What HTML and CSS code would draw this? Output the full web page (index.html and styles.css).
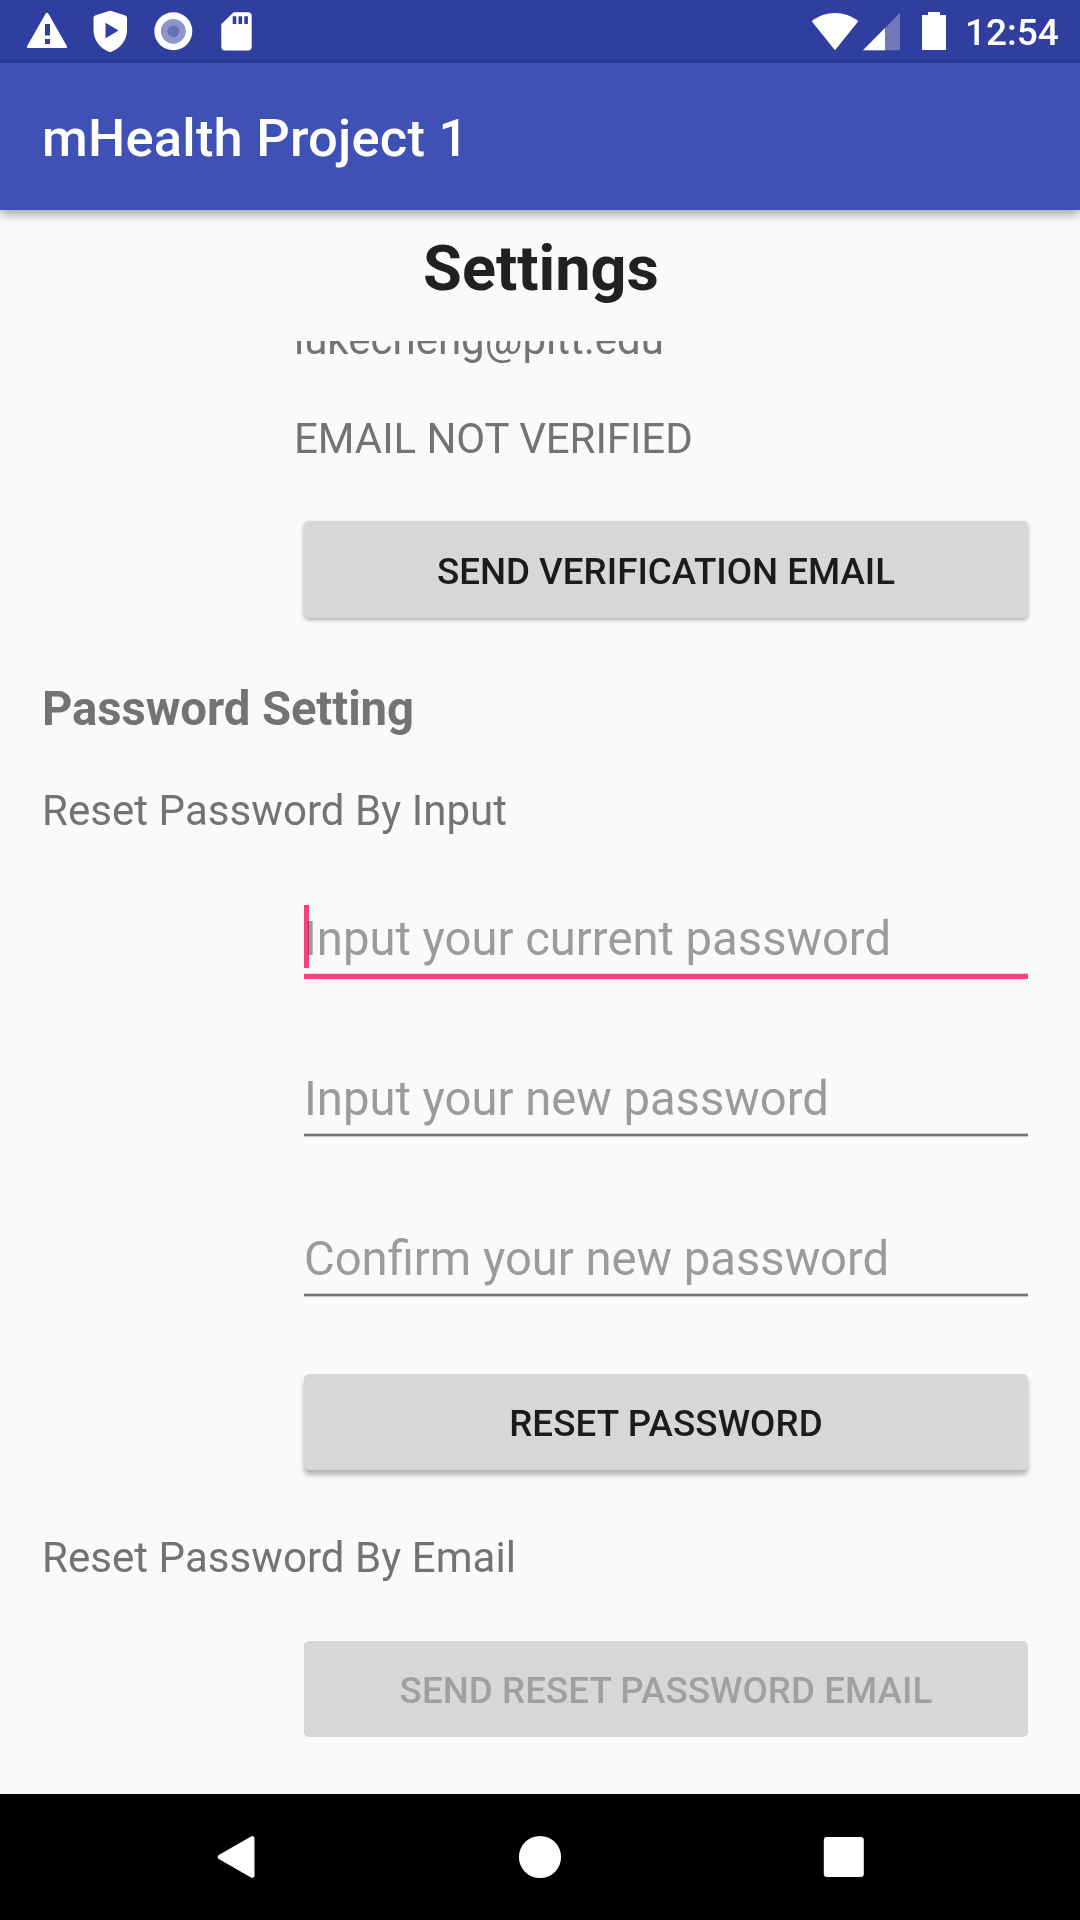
FILE: index.html
```html
<!DOCTYPE html>
<html lang="en">
<head>
<meta charset="utf-8">
<title>mHealth Project 1</title>
<link rel="stylesheet" href="styles.css">
</head>
<body>
<div class="screen">
  <header class="status-bar">
    <svg class="status-icons" width="280" height="63" viewBox="0 0 280 63">
      <path fill="#fff" fill-rule="evenodd" d="M45.6 13.8Q47 11.8 48.4 13.8L66.8 46Q67.6 48 65.6 48H28.4Q26.4 48 27.2 46ZM45 24V35.5H50V24ZM45 39V44H50V39Z"/>
      <path fill="#fff" fill-rule="evenodd" d="M109 10.9Q110.2 10.4 111.4 10.9L125.4 15.6Q127 16.2 127 18V30C127 41 119.5 49 110.2 52.3C101 49 93.5 41 93.5 30V18Q93.5 16.2 95 15.6ZM105.5 22.8V38.2L118.6 30.5Z"/>
      <circle cx="173.3" cy="31.3" r="19" fill="#fff"/>
      <circle cx="173.3" cy="31.3" r="12.4" fill="#8b94cb"/>
      <circle cx="173.3" cy="31.3" r="5.8" fill="#6570b8"/>
      <path fill="#fff" fill-rule="evenodd" d="M233.5 12.3H248Q251.7 12.3 251.7 16V46.8Q251.7 50.5 248 50.5H225Q221.3 50.5 221.3 46.8V24.3ZM232.7 16.3V24H236.3V16.3ZM238.5 16.3V24H242.1V16.3ZM244.3 16.3V24H247.9V16.3Z"/>
    </svg>
    <svg class="system-icons" width="160" height="63" viewBox="800 0 160 63">
      <path fill="#fff" d="M835 50.2L811.7 21.3C825 10.2 845 10.2 858.3 21.3Z"/>
      <path fill="#7179bb" d="M863 50.2L900 13V50.2Z"/>
      <path fill="#fff" d="M863 50.2L885 28V50.2Z"/>
      <path fill="#fff" d="M922 15H928V12H940V15H946V50H922Z"/>
    </svg>
    <span class="clock">12:54</span>
  </header>
  <div class="app-bar">mHealth Project 1</div>
  <h1 class="page-title">Settings</h1>
  <main class="content">
    <p class="text email">lukecheng@pitt.edu</p>
    <p class="text verify-state">EMAIL NOT VERIFIED</p>
    <button class="button verify">SEND VERIFICATION EMAIL</button>
    <h2 class="section-title">Password Setting</h2>
    <p class="text by-input">Reset Password By Input</p>
    <div class="field focused"><span class="caret"></span>Input your current password</div>
    <div class="field">Input your new password</div>
    <div class="field confirm">Confirm your new password</div>
    <button class="button reset">RESET PASSWORD</button>
    <p class="text by-email">Reset Password By Email</p>
    <button class="button send-reset" disabled>SEND RESET PASSWORD EMAIL</button>
  </main>
  <nav class="nav-bar">
    <svg width="48" height="48" viewBox="0 0 48 48"><path fill="#fff" d="M6.8 22L39 3.4Q42.500 2 42.500 5.800V42.200Q42.500 46 39 44.600L6.800 26Q4.400 24 6.800 22Z"/></svg>
    <svg width="48" height="48" viewBox="0 0 48 48"><circle cx="24" cy="24" r="21.1" fill="#fff"/></svg>
    <svg width="48" height="48" viewBox="0 0 48 48"><rect x="3.8" y="4.1" width="40" height="39.8" rx="3" fill="#fff"/></svg>
  </nav>
</div>
</body>
</html>
```

FILE: styles.css
```css
* {
  box-sizing: border-box;
}

body {
  margin: 0;
  font-family: Roboto, sans-serif;
  background: #fafafa;
}

.screen {
  display: flex;
  flex-direction: column;
  width: 1080px;
  height: 1920px;
  overflow: hidden;
  background: #fafafa;
}

.status-bar {
  display: flex;
  flex: none;
  height: 63px;
  background: #303f9f;
}

.system-icons {
  margin-left: 520px;
}

.clock {
  margin-left: 5px;
  padding-top: 1px;
  font-size: 37px;
  font-weight: 500;
  line-height: 63px;
  color: #fff;
}

.app-bar {
  flex: none;
  height: 147px;
  padding: 4px 42px 0;
  font-size: 52.5px;
  font-weight: 500;
  line-height: 142px;
  letter-spacing: 0.22px;
  color: #fff;
  background: #3f51b5;
  box-shadow: 0 4px 10px rgba(0, 0, 0, 0.36);
}

.page-title {
  flex: none;
  height: 131px;
  margin: 0;
  padding-left: 2px;
  font-size: 63px;
  font-weight: 700;
  line-height: 117px;
  text-align: center;
  color: #212121;
}

.content {
  display: flex;
  flex: 1;
  flex-direction: column;
  min-height: 0;
  padding: 0 52px 0 42px;
  overflow: hidden;
}

.text {
  flex: none;
  margin: 0;
  font-size: 42px;
  line-height: 50px;
  color: #737373;
}

.email {
  margin: -26px 0 0 252px;
}

.verify-state {
  margin: 49px 0 0 252px;
  letter-spacing: -0.06px;
}

.section-title {
  flex: none;
  margin: 63px 0 0;
  font-size: 47.25px;
  font-weight: 700;
  line-height: 56px;
  letter-spacing: -0.08px;
  color: #737373;
}

.by-input {
  margin-top: 49px;
  letter-spacing: 0.06px;
}

.by-email {
  margin-top: 63px;
  letter-spacing: 0.06px;
}

.button {
  flex: none;
  height: 96px;
  margin: 0 0 0 262px;
  padding: 3px 0 0;
  border: 0;
  border-radius: 5px;
  font: 500 36.75px/44px Roboto, sans-serif;
  color: #1b1b1b;
  background: #d6d8d7;
}

.verify {
  height: 97px;
  margin-top: 57px;
  padding-top: 5px;
  box-shadow: 0 2px 4px rgba(0, 0, 0, 0.32);
}

.reset {
  margin-top: 77px;
  letter-spacing: 0.1px;
  box-shadow: 0 5px 5px rgba(0, 0, 0, 0.28);
}

.send-reset {
  margin-top: 58px;
  letter-spacing: 0.05px;
  color: #a0a0a0;
}

.field {
  position: relative;
  flex: none;
  height: 72px;
  margin: 86px 0 0 262px;
  font-size: 47.2px;
  line-height: 68px;
  color: #9b9b9b;
  background: linear-gradient(#d2d2d2 0 1px, #747474 1px 3px, #c8c8c8 3px) bottom / 100% 4px no-repeat;
}

.focused {
  height: 74px;
  margin-top: 69px;
  background: linear-gradient(#fdc9d9 0 1px, #ff4081 1px) bottom / 100% 6px no-repeat;
}

.confirm {
  margin-top: 88px;
}

.caret {
  position: absolute;
  top: 0;
  left: 0;
  width: 5px;
  height: 63px;
  background: #ff4081;
  mix-blend-mode: multiply;
}

.nav-bar {
  display: grid;
  flex: none;
  grid-template-columns: repeat(3, 304px);
  place-content: center;
  place-items: center;
  height: 126px;
  background: #000;
}
```
